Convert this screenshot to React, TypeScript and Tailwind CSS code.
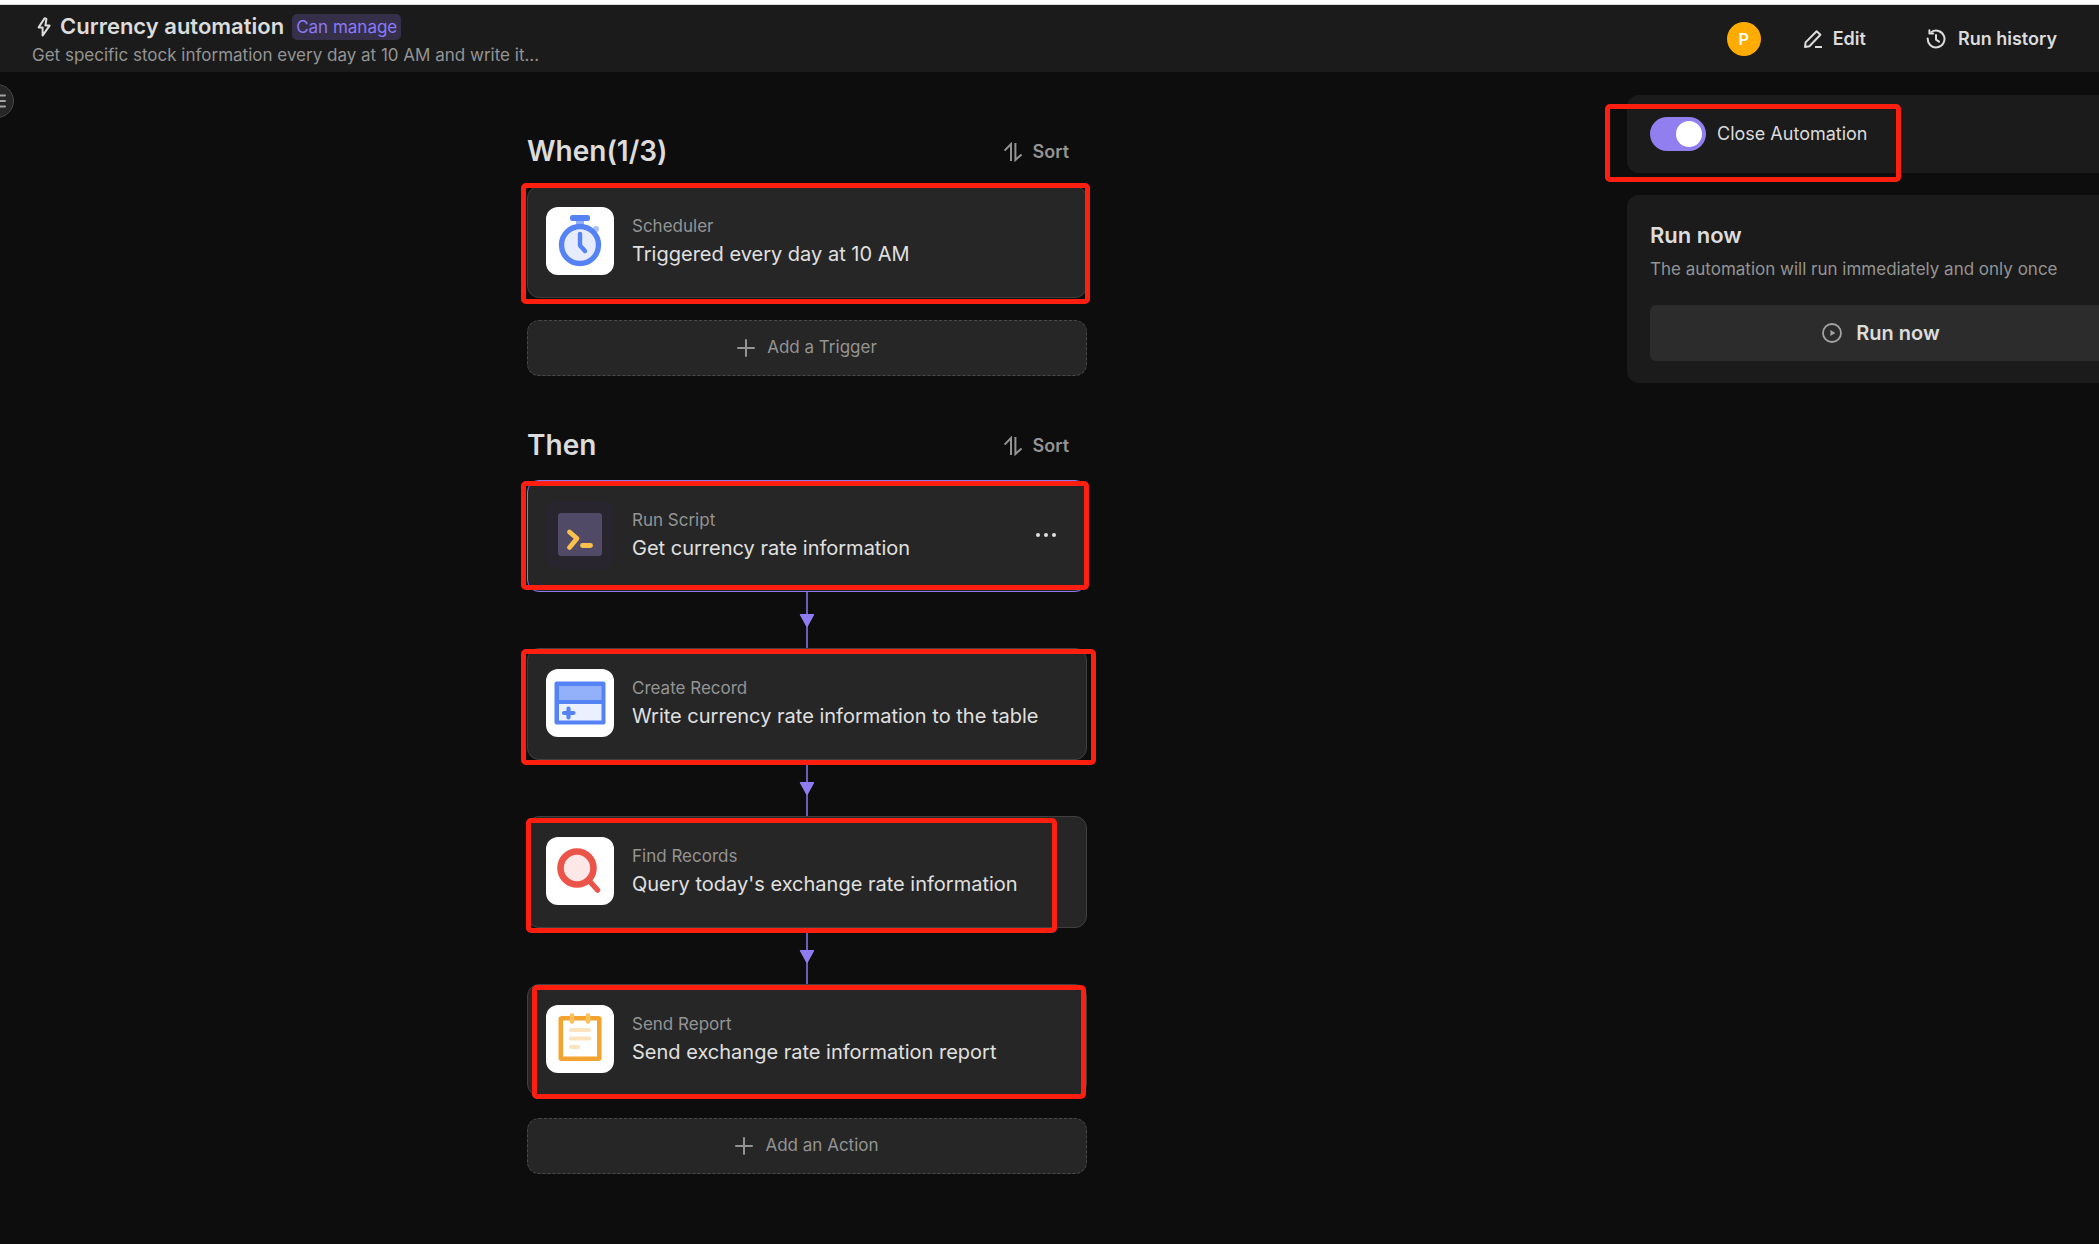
import React, { ReactNode, useState } from "react";

type Step = {
  kind: string;
  title: string;
  icon: ReactNode;
  mark: string;
  active?: boolean;
};

const BoltIcon = () => (
  <svg className="h-6 w-4 shrink-0 text-[#dcdcdc]" viewBox="0 0 16 24" fill="none" stroke="currentColor" strokeWidth="2" strokeLinejoin="round">
    <path d="M8.6 3.2 2.6 12.4H6.6V20.6L13.6 10.6H9.4L10.4 4Z" />
  </svg>
);

const PencilIcon = () => (
  <svg className="size-5" viewBox="0 0 20 20" fill="none" stroke="currentColor" strokeWidth="2" strokeLinejoin="round">
    <path d="M2 18 2.6 13.4 13.6 2.2 17.4 5.8 6.4 17.2Z" />
    <path d="M12 18h7" />
  </svg>
);

const HistoryIcon = () => (
  <svg className="size-5" viewBox="0 0 20 20" fill="none" stroke="currentColor" strokeWidth="2" strokeLinejoin="round" strokeLinecap="round">
    <path d="M5.4 3A8.4 8.4 0 1 1 1.7 9.4" />
    <path d="M3.4 1.2V4.6H7.2" />
    <path d="M10 6v4.6l3 2" />
  </svg>
);

const SortIcon = () => (
  <svg className="size-5" viewBox="0 0 20 20" fill="none" stroke="currentColor" strokeWidth="2">
    <path d="M1.6 8.6 8 2V19" />
    <path d="M12.4 1V18L18.6 12.4" />
  </svg>
);

const PlusIcon = () => (
  <svg className="size-[18px]" viewBox="0 0 18 18" fill="none" stroke="currentColor" strokeWidth="2" strokeLinecap="round">
    <path d="M9 1v16M1 9h16" />
  </svg>
);

const PlayIcon = () => (
  <svg className="size-5 text-[#a3a3a3]" viewBox="0 0 20 20" fill="none">
    <circle cx="10" cy="10" r="9" stroke="currentColor" strokeWidth="1.8" />
    <path d="M8.4 7v6l5-3Z" fill="currentColor" />
  </svg>
);

const MenuIcon = () => (
  <svg className="size-4" viewBox="0 0 16 16" stroke="currentColor" strokeWidth="2" strokeLinecap="round">
    <path d="M2 2.5h12M2 8h12M2 13.5h12" />
  </svg>
);

const ClockIcon = () => (
  <svg className="size-[68px] rounded-xl bg-white" viewBox="0 0 68 68" fill="none">
    <path d="M30 12h8v8h-8Z" fill="#93b1fa" />
    <rect x="24" y="8" width="20" height="6" rx="2.5" fill="#5583f5" />
    <circle cx="50" cy="22" r="3" fill="#a9c0fb" />
    <circle cx="34" cy="38" r="18.5" fill="#e6ecfd" stroke="#5583f5" strokeWidth="5.4" />
    <path d="M34 27v11.5l5 5.5" stroke="#5583f5" strokeWidth="4.4" strokeLinecap="round" strokeLinejoin="round" />
  </svg>
);

const ScriptIcon = () => (
  <svg className="size-[68px] rounded-xl bg-[#29252f]" viewBox="0 0 68 68" fill="none">
    <rect x="12" y="12" width="44" height="43" rx="3" fill="#504a66" />
    <path d="M23.5 31 31 37.5 23.5 46.5" stroke="#fcc14c" strokeWidth="4.8" strokeLinecap="round" strokeLinejoin="round" />
    <path d="M36.5 44.5h8" stroke="#fcc14c" strokeWidth="4.8" strokeLinecap="round" />
  </svg>
);

const TableIcon = () => (
  <svg className="size-[68px] rounded-xl bg-white" viewBox="0 0 68 68" fill="none">
    <rect x="8.5" y="12.5" width="51" height="43" rx="2" fill="#5583f5" />
    <rect x="13" y="17" width="42.5" height="14" fill="#93b1fa" />
    <rect x="13" y="35" width="42.5" height="16.5" fill="#eaf0fe" />
    <path d="M22.5 39.5v9M18 44h9.5" stroke="#5583f5" strokeWidth="4.2" strokeLinecap="round" />
  </svg>
);

const SearchIcon = () => (
  <svg className="size-[68px] rounded-xl bg-white" viewBox="0 0 68 68" fill="none">
    <path d="M43.5 44 51.5 53" stroke="#eb5549" strokeWidth="5.5" strokeLinecap="round" />
    <circle cx="31" cy="31" r="16.5" fill="#fde8e7" stroke="#eb5549" strokeWidth="6.6" />
  </svg>
);

const ReportIcon = () => (
  <svg className="size-[68px] rounded-xl bg-white" viewBox="0 0 68 68" fill="none">
    <rect x="14.8" y="13.3" width="38.5" height="40.5" rx="1" stroke="#f3a430" strokeWidth="4.6" />
    <path d="M26 10.5v6M42 10.5v6" stroke="#fbc05c" strokeWidth="4.6" strokeLinecap="round" />
    <path d="M25 25h18M25 33.5h18M25 42h7" stroke="#fde3bd" strokeWidth="4.2" strokeLinecap="round" />
  </svg>
);

const triggers: Step[] = [
  {
    kind: "Scheduler",
    title: "Triggered every day at 10 AM",
    icon: <ClockIcon />,
    mark: "-left-[7px] -right-1 -top-1 -bottom-[7px]",
  },
];

const actions: Step[] = [
  {
    kind: "Run Script",
    title: "Get currency rate information",
    icon: <ScriptIcon />,
    mark: "-left-[7px] -right-[3px] top-0 bottom-px",
    active: true,
  },
  {
    kind: "Create Record",
    title: "Write currency rate information to the table",
    icon: <TableIcon />,
    mark: "-left-[7px] -right-[10px] top-0 -bottom-[6px]",
  },
  {
    kind: "Find Records",
    title: "Query today's exchange rate information",
    icon: <SearchIcon />,
    mark: "-left-[2px] right-[29px] top-[1px] -bottom-[6px]",
  },
  {
    kind: "Send Report",
    title: "Send exchange rate information report",
    icon: <ReportIcon />,
    mark: "left-1 right-0 top-0 -bottom-[4px]",
  },
];

function Mark({ className }: { className: string }) {
  return (
    <div className={`pointer-events-none absolute z-10 rounded-[5px] border-[5px] border-[#ff1f10] ${className}`} />
  );
}

function SectionHeader({ title }: { title: string }) {
  return (
    <div className="flex h-10 items-center justify-between pr-[18px]">
      <h2 className="text-[28px] font-semibold text-[#dcdcdc]">{title}</h2>
      <button type="button" className="flex items-center gap-2.5 pt-0.5 text-lg font-semibold text-[#949494]">
        <SortIcon />
        Sort
      </button>
    </div>
  );
}

function StepCard({ step }: { step: Step }) {
  return (
    <div
      className={`relative flex h-28 items-start rounded-xl border bg-[#262626] pl-[18px] pr-[30px] pt-5 ${
        step.active ? "border-[#8b7af0]" : "border-[#404040]"
      }`}
    >
      {step.icon}
      <div className="ml-[18px] flex-1 pt-[5px]">
        <p className="text-[17px] leading-7 text-[#949494]">{step.kind}</p>
        <p className="text-xl leading-7 text-[#e0e0e0]">{step.title}</p>
      </div>
      {step.active && (
        <button type="button" aria-label="More options" className="flex h-[68px] items-center gap-1">
          <span className="size-1 rounded-full bg-[#e0e0e0]" />
          <span className="size-1 rounded-full bg-[#e0e0e0]" />
          <span className="size-1 rounded-full bg-[#e0e0e0]" />
        </button>
      )}
      <Mark className={step.mark} />
    </div>
  );
}

function Connector() {
  return (
    <div className="flex h-14 justify-center">
      <svg className="h-14 w-4" viewBox="0 0 16 56">
        <path d="M8 0v56" stroke="#8b7af0" strokeWidth="1.5" />
        <path d="M1.5 22h13a.7.7 0 0 1 .6 1.1L8.8 34.5a1 1 0 0 1-1.6 0L.9 23.1A.7.7 0 0 1 1.5 22Z" fill="#8f7cf0" />
      </svg>
    </div>
  );
}

function AddButton({ label }: { label: string }) {
  return (
    <button
      type="button"
      className="mt-[22px] flex h-14 w-full items-center justify-center gap-3 rounded-xl border border-dashed border-[#484848] bg-[#262626] text-[17px] text-[#949494]"
    >
      <PlusIcon />
      {label}
    </button>
  );
}

export default function App() {
  const [enabled, setEnabled] = useState(true);

  return (
    <div className="flex min-h-screen flex-col overflow-hidden border-t-4 border-white bg-[#0d0d0d] font-['Inter',sans-serif]">
      <header className="flex h-[68px] items-center justify-between border-t border-[#d8d8d8] bg-[#1b1b1b] pl-8 pr-[42px]">
        <div>
          <div className="flex h-8 items-center pl-1">
            <BoltIcon />
            <h1 className="ml-2 text-[22px] font-semibold text-[#dcdcdc]">Currency automation</h1>
            <span className="ml-2 rounded-[5px] bg-[#352f4a] px-1 text-[17px] leading-[26px] text-[#8b7af6]">Can manage</span>
          </div>
          <p className="text-[17px] leading-6 text-[#949494]">
            Get specific stock information every day at 10 AM and write it...
          </p>
        </div>
        <div className="flex items-center text-lg font-semibold text-[#dcdcdc]">
          <span className="flex size-[34px] items-center justify-center rounded-full bg-[#ffab00] text-base text-white">P</span>
          <button type="button" className="ml-[42px] flex items-center gap-2.5">
            <PencilIcon />
            Edit
          </button>
          <button type="button" className="ml-[60px] flex items-center gap-3">
            <HistoryIcon />
            Run history
          </button>
        </div>
      </header>

      <div className="relative flex flex-1">
        <button
          type="button"
          aria-label="Open menu"
          className="absolute -left-5 top-3 flex size-[34px] items-center justify-end rounded-full border border-[#484848] bg-[#262626] pr-1.5 text-[#a3a3a3]"
        >
          <MenuIcon />
        </button>

        <main className="flex flex-1 justify-center">
          <div className="w-[560px] pb-[70px] pt-[59px]">
            <section>
              <SectionHeader title="When(1/3)" />
              <div className="pt-[15px]">
                {triggers.map((step) => (
                  <StepCard key={step.kind} step={step} />
                ))}
              </div>
              <AddButton label="Add a Trigger" />
            </section>

            <section className="pt-[49px]">
              <SectionHeader title="Then" />
              <div className="pt-[15px]">
                {actions.map((step, i) => (
                  <React.Fragment key={step.kind}>
                    {i > 0 && <Connector />}
                    <StepCard step={step} />
                  </React.Fragment>
                ))}
              </div>
              <AddButton label="Add an Action" />
            </section>
          </div>
        </main>

        <aside className="w-[485px] pl-[13px] pt-[23px]">
          <div className="flex w-[508px] flex-col gap-[22px]">
            <div className="relative flex h-[78px] items-start rounded-xl bg-[#1b1b1b] px-[23px] pt-[22px]">
              <label className="flex cursor-pointer items-center gap-[11px] text-lg text-[#dcdcdc]">
                <input
                  type="checkbox"
                  className="peer sr-only"
                  checked={enabled}
                  onChange={(e) => setEnabled(e.target.checked)}
                />
                <span className="flex h-[34px] w-14 items-center rounded-full bg-[#484848] px-1 peer-checked:justify-end peer-checked:bg-[#917ff0]">
                  <span className="size-[26px] rounded-full bg-white" />
                </span>
                Close Automation
              </label>
              <Mark className="-left-[22px] top-[9px] -bottom-[9px] right-[234px]" />
            </div>

            <div className="rounded-xl bg-[#1b1b1b] px-[23px] pb-[22px] pt-6">
              <h3 className="text-[22px] font-semibold leading-8 text-[#dcdcdc]">Run now</h3>
              <p className="pt-1.5 text-[17px] leading-6 text-[#949494]">
                The automation will run immediately and only once
              </p>
              <button
                type="button"
                className="mt-6 flex h-14 w-full items-center justify-center gap-3.5 rounded-md bg-[#2c2c2c] text-xl font-semibold text-[#dcdcdc]"
              >
                <PlayIcon />
                Run now
              </button>
            </div>
          </div>
        </aside>
      </div>
    </div>
  );
}
